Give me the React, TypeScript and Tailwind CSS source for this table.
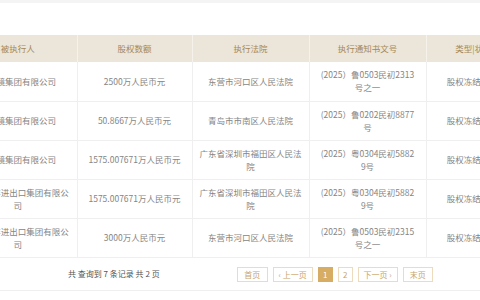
const rows = [
  {
    name: ["天鸿镜集团有限公司"],
    amount: "2500万人民币元",
    court: ["东营市河口区人民法院"],
    doc: ["(2025）鲁0503民初2313", "号之一"],
    type: "股权冻结|冻结",
  },
  {
    name: ["天鸿镜集团有限公司"],
    amount: "50.8667万人民币元",
    court: ["青岛市市南区人民法院"],
    doc: ["(2025）鲁0202民初8877", "号"],
    type: "股权冻结|冻结",
  },
  {
    name: ["天鸿镜集团有限公司"],
    amount: "1575.007671万人民币元",
    court: ["广东省深圳市福田区人民法", "院"],
    doc: ["(2025）粤0304民初5882", "9号"],
    type: "股权冻结|冻结",
  },
  {
    name: ["山东海洋进出口集团有限公", "司"],
    amount: "1575.007671万人民币元",
    court: ["广东省深圳市福田区人民法", "院"],
    doc: ["(2025）粤0304民初5882", "9号"],
    type: "股权冻结|冻结",
  },
  {
    name: ["山东海洋进出口集团有限公", "司"],
    amount: "3000万人民币元",
    court: ["东营市河口区人民法院"],
    doc: ["(2025）鲁0503民初2315", "号之一"],
    type: "股权冻结|冻结",
  },
];

const headers = ["被执行人", "股权数额", "执行法院", "执行通知书文号", "类型|状态"];

function Lines({ lines }: { lines: string[] }) {
  return (
    <>
      {lines.map((l, i) => (
        <div key={i} className="whitespace-nowrap">
          {l}
        </div>
      ))}
    </>
  );
}

function PageBtn({
  children,
  active,
  w,
}: {
  children: React.ReactNode;
  active?: boolean;
  w: string;
}) {
  return (
    <span
      className={
        "flex h-[15px] items-center justify-center border text-[8px] " +
        w +
        " " +
        (active
          ? "border-[#d6ad62] bg-[#d6ad62] text-white"
          : "border-[#ecdcbd] bg-white text-[#c9a568]")
      }
    >
      {children}
    </span>
  );
}

export default function App() {
  return (
    <div className="h-[300px] w-[480px] overflow-hidden bg-white font-['Noto_Sans_CJK_SC','Noto_Sans',sans-serif] text-[8.5px]">
      <div className="h-[35px] border-t-[3px] border-[#f4f4f4]" />
      <div className="overflow-hidden">
        <table className="-ml-[41px] w-[600px] table-fixed border-collapse">
          <colgroup>
            <col className="w-[118px]" />
            <col className="w-[115px]" />
            <col className="w-[117px]" />
            <col className="w-[117px]" />
            <col className="w-[95px]" />
            <col className="w-[38px]" />
          </colgroup>
          <thead>
            <tr className="h-[27px] bg-[#ece5d9] text-[#a68754]">
              {headers.map((h) => (
                <th
                  key={h}
                  className="whitespace-nowrap border-r border-[#f6f1ea] px-[6px] text-center font-normal"
                >
                  {h}
                </th>
              ))}
              <th className="font-normal" />
            </tr>
          </thead>
          <tbody className="text-[#858585]">
            {rows.map((r, i) => (
              <tr key={i} className="h-[39px] border-b border-[#efefef]">
                <td className="border-r border-[#efefef] px-[6px] text-center leading-[13px]">
                  <Lines lines={r.name} />
                </td>
                <td className="border-r border-[#efefef] px-[6px] text-center leading-[13px]">
                  {r.amount}
                </td>
                <td className="border-r border-[#efefef] px-[6px] text-center leading-[13px]">
                  <Lines lines={r.court} />
                </td>
                <td className="border-r border-[#efefef] px-[6px] text-center leading-[13px]">
                  <Lines lines={r.doc} />
                </td>
                <td className="border-r border-[#efefef] px-[6px] text-center leading-[13px] whitespace-nowrap">
                  {r.type}
                </td>
                <td />
              </tr>
            ))}
          </tbody>
        </table>
      </div>
      <div className="flex h-[33px] items-center border-b border-[#efefef] pl-[68px]">
        <span className="whitespace-nowrap text-[8px] text-[#555]">
          共 查询到 7 条记录 共 2 页
        </span>
        <div className="ml-[77px] mt-[2px] flex items-center gap-[5px]">
          <PageBtn w="w-[31px]">首页</PageBtn>
          <PageBtn w="w-[40px]">‹ 上一页</PageBtn>
          <PageBtn w="w-[15px]" active>
            1
          </PageBtn>
          <PageBtn w="w-[15px]">2</PageBtn>
          <PageBtn w="w-[40px]">下一页 ›</PageBtn>
          <PageBtn w="w-[30px]">末页</PageBtn>
        </div>
      </div>
    </div>
  );
}
